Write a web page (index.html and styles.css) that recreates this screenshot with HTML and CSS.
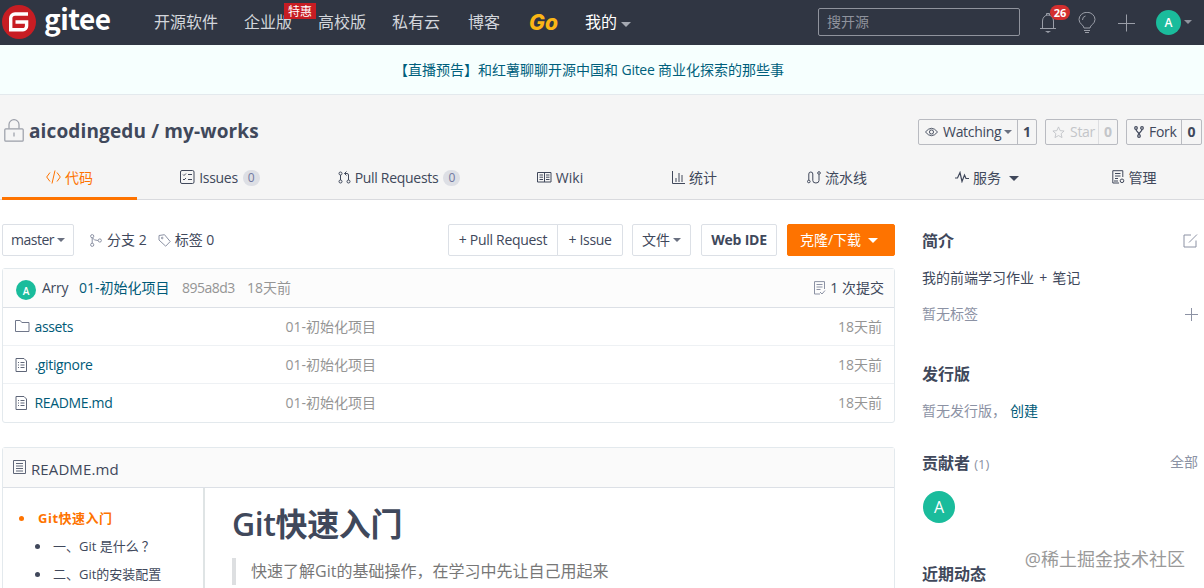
FILE: index.html
```html
<!DOCTYPE html>
<html lang="zh-CN">
<head>
  <meta charset="UTF-8" />
  <title>aicodingedu / my-works - Gitee</title>
  <link rel="stylesheet" href="styles.css">
</head>
<body>

  <!-- Top navigation -->
  <header class="navbar">
    <a class="logo">
      <svg width="34" height="34" viewBox="0 0 34 34"><circle cx="17" cy="17" r="17" fill="#c71d23"/><path d="M26 9H13a4.300 4.300 0 0 0-4.300 4.300V24.700H21a3.600 3.600 0 0 0 3.600-3.600V17H13.500" fill="none" stroke="#fff" stroke-width="3.400"/></svg>
      <span class="logo-text">gitee</span>
    </a>
    <nav class="menu">
      <a>开源软件</a>
      <a class="ent">企业版<span class="sale">特惠</span></a>
      <a>高校版</a>
      <a>私有云</a>
      <a class="blog">博客</a>
      <a class="go">Go</a>
      <a class="mine">我的<i class="caret"></i></a>
    </nav>
    <div class="search">搜开源</div>
    <div class="tools">
      <span class="bell">
        <svg width="18" height="22" viewBox="0 0 18 22" fill="none" stroke="#9a9ea8"><path d="M1 16.500h16M3.500 16.500V9a5.500 6 0 0 1 11 0v7.500M7.500 3V1.500h3V3"/><path d="M6 19h6l-3 2z" fill="#9a9ea8" stroke="none"/></svg>
        <b class="count">26</b>
      </span>
      <svg class="bulb" width="18" height="22" viewBox="0 0 18 22" fill="none" stroke="#9a9ea8"><path d="M6 16c0-3-5-4-5-8.500a8 7.200 0 0 1 16 0C17 12 12 13 12 16zM6 18.500h6M7 20.500h4M4.500 8a4 4 0 0 1 3-4"/></svg>
      <svg class="plus" width="18" height="18" viewBox="0 0 18 18" stroke="#9a9ea8"><path d="M8.500 .5v17M0 9.500h17"/></svg>
      <span class="avatar avatar-nav">A</span>
      <i class="caret caret-nav"></i>
    </div>
  </header>

  <div class="notice"><a>【直播预告】和红薯聊聊开源中国和 <span class="lat">Gitee</span> 商业化探索的那些事</a></div>

  <!-- Repository header -->
  <section class="repo-head">
    <div class="repo-top">
      <svg class="lock" width="20" height="23" viewBox="0 0 20 23" fill="none" stroke="#9a9ea8" stroke-width="1.200"><rect x=".8" y="9.800" width="18.400" height="12.400" rx="1"/><path d="M5 9.500V5.500a5 4.800 0 0 1 10 0v4M10 13.500v4"/></svg>
      <h1>aicodingedu / my-works</h1>
      <div class="social">
        <span class="social-btn watch">
          <svg width="13" height="12" viewBox="0 0 14 12" fill="none" stroke="#40485b"><path d="M.5 6Q7-2 13.500 6 7 14 .5 6z"/><circle cx="7" cy="6" r="2.200"/></svg>
          <em>Watching</em><i class="caret"></i><b>1</b>
        </span>
        <span class="social-btn star">
          <svg width="13" height="13" viewBox="0 0 14 14" fill="none" stroke="#c3c5c9"><path d="M7 1l1.800 4 4.200.4-3.200 2.900 1 4.200L7 10.300l-3.800 2.200 1-4.200L1 5.400 5.200 5z"/></svg>
          <em>Star</em><b>0</b>
        </span>
        <span class="social-btn fork">
          <svg width="10" height="12" viewBox="0 0 10 12" fill="none" stroke="#40485b" stroke-width="1.200"><circle cx="2" cy="2" r="1.300"/><circle cx="8" cy="2" r="1.300"/><circle cx="5" cy="10" r="1.300"/><path d="M2 3.300C2 6 5 5.500 5 8.700 5 5.500 8 6 8 3.300"/></svg>
          <em>Fork</em><b>0</b>
        </span>
      </div>
    </div>
    <nav class="tabs">
      <a class="tab active"><svg width="15" height="14" viewBox="0 0 15 14" fill="none" stroke="#fe7300"><path d="M4 2.500L.7 7 4 11.500M11 2.500L14.300 7 11 11.500M9 .5L6 13.500"/></svg>代码</a>
      <a class="tab"><svg width="15" height="14" viewBox="0 0 15 14" fill="none" stroke="#40485b"><rect x=".5" y=".5" width="13.500" height="13" rx="1.500"/><path d="M3 4.500l1 1L6 3.500M3 9l1 1 2-2M8 4.500h4M8 9.500h4"/></svg><span class="lat">Issues</span><span class="num">0</span></a>
      <a class="tab"><svg width="13" height="13" viewBox="0 0 13 13" fill="none" stroke="#40485b"><circle cx="2.500" cy="2.500" r="1.500"/><circle cx="2.500" cy="10.500" r="1.500"/><circle cx="10.500" cy="10.500" r="1.500"/><path d="M2.500 4v5M10.500 9V4q0-1.500-1.500-1.500H6.500M8.500.5l-2 2 2 2"/></svg><span class="lat">Pull Requests</span><span class="num">0</span></a>
      <a class="tab"><svg width="15" height="11" viewBox="0 0 15 11" fill="none" stroke="#40485b"><path d="M.5.5h13.500v9.500H.5zM7.500.5V10M2.500 3H6M2.500 5.200H6M2.500 7.500H6M9 3h3.500M9 5.200h3.500M9 7.500h3.500"/></svg><span>Wiki</span></a>
      <a class="tab"><svg width="13" height="13" viewBox="0 0 13 13" fill="none" stroke="#40485b"><path d="M.5 0v12.500H13M4 11V7M7 11V2M10 11V4"/></svg>统计</a>
      <a class="tab"><svg width="14" height="13" viewBox="0 0 14 13" fill="none" stroke="#40485b"><circle cx="1.800" cy="10.500" r="1.300"/><circle cx="12" cy="2" r="1.300"/><path d="M1.800 9V3a2 2 0 0 1 4 0v6.500a3.100 2.500 0 0 0 6.200 0V3.500"/></svg>流水线</a>
      <a class="tab"><svg width="14" height="12" viewBox="0 0 14 12" fill="none" stroke="#40485b" stroke-width="1.200"><path d="M0 7h2.500L5 1.500 7 10.500 9.500 4 11 7.500h3"/></svg>服务<i class="caret caret-tab"></i></a>
      <a class="tab"><svg width="13" height="14" viewBox="0 0 13 14" fill="none" stroke="#40485b"><path d="M7 13H.8V.7h10V7M3 3.500h5.500M3 6h5.500M3 8.500h3M2 11h4"/><circle cx="10" cy="10.800" r="1.800"/></svg>管理</a>
    </nav>
  </section>

  <main class="content">
    <div class="left">

      <!-- Branch toolbar -->
      <div class="toolbar">
        <span class="btn master"><span>master</span><i class="caret"></i></span>
        <span class="meta branch"><svg width="12" height="13" viewBox="0 0 12 13" fill="none" stroke="#8c92a4"><circle cx="2.200" cy="2.200" r="1.600"/><circle cx="2.200" cy="10.800" r="1.600"/><circle cx="9.800" cy="6.500" r="1.600"/><path d="M2.200 4v5.200M2.500 4Q4 6.500 8 6.500"/></svg>分支 2</span>
        <span class="meta"><svg width="13" height="13" viewBox="0 0 13 13" fill="none" stroke="#8c92a4"><path d="M1 1.500L6.500.7l5.700 6.800-4.500 4.700L1 6z"/><circle cx="4.200" cy="4" r=".8"/></svg>标签 0</span>
        <span class="btn-group"><span class="btn pr">+ Pull Request</span><span class="btn issue">+ Issue</span></span>
        <span class="btn file">文件<i class="caret"></i></span>
        <span class="btn ide">Web IDE</span>
        <span class="btn clone">克隆/下载<i class="caret"></i></span>
      </div>

      <!-- File list -->
      <div class="box files">
        <div class="commit">
          <span class="avatar avatar-sm">A</span>
          <span class="author lat">Arry</span>
          <a class="msg">01-初始化项目</a>
          <span class="sha">895a8d3</span>
          <span class="ago">18天前</span>
          <span class="commits"><svg width="13" height="14" viewBox="0 0 13 14" fill="none" stroke="#8c92a4"><path d="M11.500 8V.6H1.500v9.500M1.500 10v3H7M3.500 3.500h6M3.500 6h6M3.500 8.500h4M7 11l2 2 3-3.500"/></svg>1 次提交</span>
        </div>
        <div class="row">
          <svg width="15" height="13" viewBox="0 0 15 13" fill="none" stroke="#70778a"><path d="M.5 11.500v-11h4.700l1.600 2h7.200v9z"/></svg>
          <a class="name">assets</a><span class="desc">01-初始化项目</span><span class="date">18天前</span>
        </div>
        <div class="row">
          <svg width="15" height="14" viewBox="0 0 15 14" fill="none" stroke="#5f6678"><path d="M1 .5h8l2.500 2.500v10.500H1zM3 4.500h1M3 7h1M3 9.500h1M5.500 4.500h4M5.500 7h4M5.500 9.500h4"/></svg>
          <a class="name">.gitignore</a><span class="desc">01-初始化项目</span><span class="date">18天前</span>
        </div>
        <div class="row">
          <svg width="15" height="14" viewBox="0 0 15 14" fill="none" stroke="#5f6678"><path d="M1 .5h8l2.500 2.500v10.500H1zM3 4.500h1M3 7h1M3 9.500h1M5.500 4.500h4M5.500 7h4M5.500 9.500h4"/></svg>
          <a class="name">README.md</a><span class="desc">01-初始化项目</span><span class="date">18天前</span>
        </div>
      </div>

      <!-- Readme -->
      <div class="box readme">
        <div class="readme-title"><svg width="13" height="14" viewBox="0 0 13 14" fill="none" stroke="#5f6678"><path d="M.5.5h12v13H.5zM3 3.500h7M3 6h7M3 8.500h7M3 11h7"/></svg><span>README.md</span></div>
        <div class="readme-body">
          <ul class="toc">
            <li class="on">Git快速入门</li>
            <li>一、Git 是什么<span class="ask">？</span></li>
            <li>二、Git的安装配置</li>
          </ul>
          <article class="article">
            <h2><span>Git</span>快速入门</h2>
            <blockquote>快速了解Git的基础操作，在学习中先让自己用起来</blockquote>
          </article>
        </div>
      </div>
    </div>

    <!-- Sidebar -->
    <aside class="side">
      <div class="side-line intro"><h3>简介</h3><svg width="15" height="14" viewBox="0 0 15 14" fill="none" stroke="#8c92a4"><path d="M8 1H1v12h12V6.500M6 8.500L14 .5"/></svg></div>
      <p class="about">我的前端学习作业 + 笔记</p>
      <div class="side-line labels"><span>暂无标签</span><svg width="13" height="13" viewBox="0 0 13 13" stroke="#8c92a4"><path d="M6.500 0v13M0 6.500h13"/></svg></div>
      <h3 class="release">发行版</h3>
      <p class="no-release">暂无发行版，<a>创建</a></p>
      <div class="side-line people"><h3>贡献者 <small>(1)</small></h3><span>全部</span></div>
      <span class="avatar avatar-lg">A</span>
      <h3 class="recent">近期动态</h3>
    </aside>
  </main>

  <div class="watermark">@稀土掘金技术社区</div>

</body>
</html>
```
FILE: styles.css
```css
* {
  box-sizing: border-box;
}
body {
  margin: 0;
  width: 1204px;
  height: 588px;
  overflow: hidden;
  position: relative;
  font-family: "Open Sans", "Noto Sans CJK SC", sans-serif;
  font-size: 14px;
  line-height: 20px;
  color: #40485b;
  background: #fff;
}
h1, h2, h3, p, ul, blockquote {
  margin: 0;
  padding: 0;
}
svg {
  flex: none;
}
a {
  white-space: nowrap;
}
.lat {
  letter-spacing: -0.3px;
}
.caret {
  display: inline-block;
  flex: none;
  border: 4px solid transparent;
  border-top-color: #6a7080;
  border-bottom: 0;
}
.avatar {
  display: flex;
  flex: none;
  align-items: center;
  justify-content: center;
  border-radius: 50%;
  background: #1abc9c;
  color: #fff;
}

/* navbar */
.navbar {
  display: flex;
  height: 45px;
  background: #303643;
  color: #d3d6dc;
}
.logo {
  display: flex;
  width: 154px;
  padding: 5px 0 0 2px;
}
.logo-text {
  margin-left: 8px;
  font: bold 28px/26px "Noto Sans CJK SC", sans-serif;
  letter-spacing: -0.5px;
  color: #fff;
}
.menu {
  display: flex;
  width: 664px;
  font-size: 16px;
  line-height: 45px;
}
.menu a {
  margin-right: 26px;
}
.menu .ent {
  position: relative;
}
.sale {
  position: absolute;
  left: 40px;
  top: 3px;
  width: 32px;
  height: 16px;
  background: #c71d23;
  color: #fff;
  font-size: 12px;
  line-height: 17px;
  text-align: center;
}
.menu .blog {
  margin-left: 2px;
  margin-right: 29px;
}
.menu .go {
  width: 29px;
  margin-right: 27px;
  color: #fbb615;
  font: italic 800 21px/46px Inter, sans-serif;
}
.menu .mine {
  display: flex;
  align-items: center;
  color: #fff;
}
.menu .caret {
  margin: 3px 0 0 4px;
  border-width: 5px;
  border-bottom: 0;
  border-top-color: #a5a9b2;
}
.search {
  width: 202px;
  height: 28px;
  margin-top: 8px;
  padding-left: 8px;
  border: 1px solid #8f939d;
  border-radius: 2px;
  color: #8f939d;
  line-height: 26px;
}
.tools {
  display: flex;
  align-items: center;
  padding-left: 19px;
}
.bell {
  position: relative;
  height: 22px;
}
.count {
  position: absolute;
  left: 11px;
  top: -7px;
  width: 20px;
  height: 15px;
  border-radius: 8px;
  background: #d32f2f;
  color: #fff;
  font-size: 11px;
  line-height: 15px;
  text-align: center;
}
.bulb {
  margin-left: 21px;
}
.plus {
  margin-left: 22px;
}
.avatar-nav {
  width: 25px;
  height: 25px;
  margin-left: 20px;
  font-size: 12px;
  font-weight: 600;
}
.caret-nav {
  margin: -2px 0 0 3px;
  border-top-color: #8f939d;
}

.notice {
  height: 50px;
  border-bottom: 1px solid #e3e9ed;
  background: #f6fffe;
  color: #005f7c;
  text-align: center;
  line-height: 50px;
  padding-right: 26px;
}

/* repo header */
.repo-head {
  height: 105px;
  border-bottom: 1px solid #d9dade;
  background: #f5f5f5;
}
.repo-top {
  display: flex;
  height: 61px;
  padding: 24px 2px 0 4px;
}
h1 {
  margin-left: 5px;
  font-size: 19px;
  line-height: 25px;
  letter-spacing: 0.14px;
}
.social {
  display: flex;
  gap: 8px;
  margin-left: auto;
}
.social-btn {
  display: flex;
  align-items: center;
  height: 26px;
  border: 1px solid #b9bbc1;
  border-radius: 2px;
  padding-left: 6px;
}
.social-btn em {
  margin-left: 5px;
  font-style: normal;
  letter-spacing: -0.3px;
}
.social-btn .caret {
  margin-left: 3px;
}
.social-btn b {
  width: 19px;
  margin-left: auto;
  border-left: 1px solid #b9bbc1;
  line-height: 24px;
  text-align: center;
}
.watch {
  width: 119px;
}
.star {
  width: 73px;
  color: #c3c5c9;
}
.star b {
  border-color: #dddee1;
}
.fork {
  width: 76px;
  padding-left: 7px;
}
.fork b {
  width: 20px;
}
.tabs {
  display: grid;
  grid-template-columns: 135px 166px 192px 130px 139px 146px 154px 140px;
  height: 44px;
  padding-left: 2px;
}
.tab {
  display: flex;
  align-items: center;
  justify-content: center;
}
.tab svg {
  margin: -2px 4px 0 0;
}
.tab.active {
  padding-top: 3px;
  border-bottom: 3px solid #fe7300;
  color: #fe7300;
}
.num {
  width: 17px;
  height: 16px;
  margin-left: 5px;
  border-radius: 8px;
  background: #dddfe5;
  color: #7178a0;
  font-size: 12px;
  line-height: 16px;
  text-align: center;
}
.caret-tab {
  margin-left: 8px;
  border-width: 5px;
  border-bottom: 0;
  border-top-color: #40485b;
}

/* main columns */
.content {
  display: flex;
}
.left {
  width: 893px;
  margin: 24px 0 0 2px;
}
.toolbar {
  display: flex;
  height: 32px;
  align-items: center;
}
.btn {
  display: flex;
  align-items: center;
  justify-content: center;
  height: 32px;
  border: 1px solid #dce0e6;
  border-radius: 2px;
  white-space: nowrap;
}
.btn .caret {
  margin-left: 3px;
}
.master {
  width: 72px;
  letter-spacing: -0.5px;
}
.meta {
  display: flex;
  align-items: center;
}
.meta svg {
  margin-right: 5px;
}
.branch {
  margin: 0 11px 0 16px;
}
.branch + .meta svg {
  margin-right: 4px;
}
.btn-group {
  display: flex;
  margin-left: auto;
}
.pr {
  width: 110px;
  border-radius: 2px 0 0 2px;
  letter-spacing: -0.3px;
}
.issue {
  width: 66px;
  margin-left: -1px;
  border-radius: 0 2px 2px 0;
  letter-spacing: -0.3px;
}
.file {
  width: 59px;
  margin-left: 9px;
}
.ide {
  width: 76px;
  margin-left: 10px;
  font-weight: bold;
  letter-spacing: -0.2px;
}
.clone {
  width: 108px;
  margin-left: 10px;
  padding-right: 4px;
  border-color: #fe7300;
  background: #fe7300;
  color: #fff;
}
.clone .caret {
  margin-left: 7px;
  border-width: 5px;
  border-bottom: 0;
  border-top-color: #fff;
}
.box {
  border: 1px solid #e3e9ed;
  border-radius: 3px;
}
.files {
  height: 155px;
  margin-top: 12px;
}
.commit {
  display: flex;
  align-items: center;
  height: 39px;
  padding: 0 10px 0 13px;
  border-bottom: 1px solid #dce0e6;
  background: #fcfcfc;
}
.avatar-sm {
  width: 20px;
  height: 20px;
  margin-top: 4px;
  padding-top: 2px;
  font-size: 10px;
  font-weight: 600;
}
.author {
  width: 37px;
  margin-left: 6px;
}
.msg {
  width: 103px;
}
.sha {
  width: 65px;
  letter-spacing: -0.5px;
}
.sha, .ago, .desc, .date {
  color: #959595;
}
.commits {
  display: flex;
  align-items: center;
  margin-left: auto;
}
.commits svg {
  margin-right: 4px;
}
.msg, .name, .no-release a {
  color: #005a78;
}
.row {
  display: flex;
  align-items: center;
  height: 38px;
  padding: 0 12px 0 12px;
  border-bottom: 1px solid #eef1f4;
}
.row:last-child {
  border-bottom: 0;
}
.name {
  width: 251px;
  margin-left: 4.5px;
  letter-spacing: -0.35px;
}
.date {
  margin-left: auto;
}

/* readme */
.readme {
  height: 160px;
  margin-top: 24px;
}
.readme-title {
  display: flex;
  align-items: center;
  height: 40px;
  padding: 2px 0 0 10px;
  border-bottom: 1px solid #dce0e6;
  background: #fafafa;
  font-size: 15px;
  letter-spacing: 0.1px;
}
.readme-title svg {
  margin: -4px 5px 0 0;
}
.readme-body {
  display: flex;
  height: 118px;
}
.toc {
  width: 202px;
  padding: 16px 0 0 48px;
  border-right: 2px solid #dfe4e5;
  font-size: 13px;
  line-height: 28px;
  white-space: nowrap;
}
.toc li {
  padding-left: 2px;
}
.toc .on {
  margin-left: -16px;
  padding-left: 3px;
  color: #fe7300;
  font-weight: bold;
  letter-spacing: 0.5px;
}
.ask {
  margin-left: 3px;
}
.article {
  padding: 16px 0 0 27px;
}
h2 {
  font-size: 32px;
  line-height: 40px;
  letter-spacing: -0.4px;
}
h2 span {
  font-weight: 600;
}
blockquote {
  height: 27px;
  margin-top: 14px;
  padding-left: 15px;
  border-left: 4px solid #dddfe1;
  color: #777;
  font-size: 16px;
  line-height: 27px;
}

/* sidebar */
.side {
  width: 276px;
  margin-left: 27px;
  padding-top: 28px;
}
h3 {
  font-size: 16px;
  line-height: 26px;
}
.side-line {
  display: flex;
  align-items: center;
  justify-content: space-between;
}
.about {
  margin-top: 14px;
  word-spacing: 1.5px;
}
.labels {
  margin-top: 16px;
  color: #8c92a4;
}
.release {
  margin-top: 37px;
}
.no-release {
  margin-top: 14px;
  color: #8c92a4;
}
.no-release a {
  margin-left: 4px;
}
.people {
  margin-top: 29px;
}
.people span, small {
  color: #8c92a4;
  font-weight: normal;
}
.people span {
  padding-bottom: 3px;
}
small {
  font-size: 13px;
}
.avatar-lg {
  width: 32px;
  height: 32px;
  margin: 14px 0 0 1px;
  font-size: 16px;
}
.recent {
  margin-top: 38px;
}

.watermark {
  position: absolute;
  right: 19px;
  bottom: 15px;
  color: #999;
  font-size: 18px;
  line-height: 28px;
}
```
